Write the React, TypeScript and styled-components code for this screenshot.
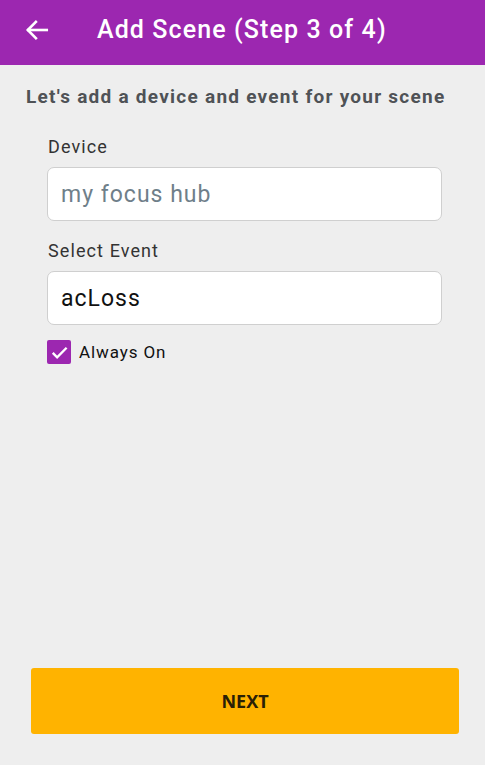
import styled, { createGlobalStyle } from "styled-components";

const GlobalStyle = createGlobalStyle`
  html, body {
    margin: 0;
    padding: 0;
    background: #eeeeee;
    font-family: Roboto, "Liberation Sans", sans-serif;
  }
  * { box-sizing: border-box; }
`;

const Screen = styled.div`
  width: 485px;
  height: 765px;
  display: flex;
  flex-direction: column;
  background: #eeeeee;
`;

const Header = styled.header`
  height: 65px;
  flex-shrink: 0;
  background: #9c27b0;
  display: flex;
  align-items: center;
  padding-left: 24px;
  padding-bottom: 6px;
  gap: 47px;
`;

const BackButton = styled.button`
  border: none;
  background: none;
  padding: 0;
  width: 26px;
  height: 26px;
  display: flex;
  align-items: center;
  justify-content: center;
  cursor: pointer;
`;

const Title = styled.h1`
  margin: 0;
  color: #fff;
  font-size: 25px;
  font-weight: 500;
  letter-spacing: 1.1px;
`;

const Body = styled.main`
  flex: 1;
  display: flex;
  flex-direction: column;
  padding: 20px 0 0;
`;

const Intro = styled.h2`
  margin: 0 0 0 26px;
  font-size: 19px;
  font-weight: 700;
  color: #4f5256;
  letter-spacing: 1.25px;
`;

const Form = styled.div`
  display: flex;
  flex-direction: column;
  padding: 28px 43px 0 47px;
`;

const Label = styled.label`
  font-size: 18px;
  color: #333;
  margin: 0 0 9px 1px;
  line-height: 22px;
  letter-spacing: 1.1px;
`;

const Field = styled.input`
  height: 54px;
  border: 1px solid #cfcfcf;
  border-radius: 7px;
  background: #fff;
  padding: 0 13px;
  font-family: Roboto, "Liberation Sans", sans-serif;
  font-size: 23px;
  letter-spacing: 1px;
  color: #111;
  margin-bottom: 19px;
  outline: none;

  &::placeholder {
    color: #6f7f8a;
  }
`;

const CheckRow = styled.div`
  display: flex;
  align-items: center;
  gap: 8px;
  margin-top: -4px;
`;

const CheckBox = styled.span`
  width: 24px;
  height: 24px;
  border-radius: 2px;
  background: #9c27b0;
  display: flex;
  align-items: center;
  justify-content: center;
`;

const CheckLabel = styled.span`
  font-size: 17px;
  color: #111;
  letter-spacing: 0.9px;
`;

const Footer = styled.div`
  padding: 0 26px 31px 31px;
`;

const NextButton = styled.button`
  width: 100%;
  height: 66px;
  border: none;
  border-radius: 3px;
  background: #ffb300;
  color: #2a2006;
  font-family: "Open Sans", "Liberation Sans", sans-serif;
  font-size: 18px;
  font-weight: 700;
  cursor: pointer;
`;

export default function App() {
  return (
    <>
      <GlobalStyle />
      <Screen>
        <Header>
          <BackButton aria-label="Back">
            <svg width="26" height="26" viewBox="0 0 24 24" fill="none" stroke="#fff" strokeWidth="2.4" strokeLinecap="square">
              <path d="M21 12H4" />
              <path d="M11 4.5L3.5 12L11 19.5" />
            </svg>
          </BackButton>
          <Title>Add Scene (Step 3 of 4)</Title>
        </Header>
        <Body>
          <Intro>Let's add a device and event for your scene</Intro>
          <Form>
            <Label>Device</Label>
            <Field placeholder="my focus hub" readOnly />
            <Label>Select Event</Label>
            <Field value="acLoss" readOnly />
            <CheckRow>
              <CheckBox>
                <svg width="19" height="19" viewBox="0 0 24 24" fill="none" stroke="#fff" strokeWidth="3">
                  <path d="M3.5 12.5L9 18L21 6" />
                </svg>
              </CheckBox>
              <CheckLabel>Always On</CheckLabel>
            </CheckRow>
          </Form>
        </Body>
        <Footer>
          <NextButton>NEXT</NextButton>
        </Footer>
      </Screen>
    </>
  );
}
